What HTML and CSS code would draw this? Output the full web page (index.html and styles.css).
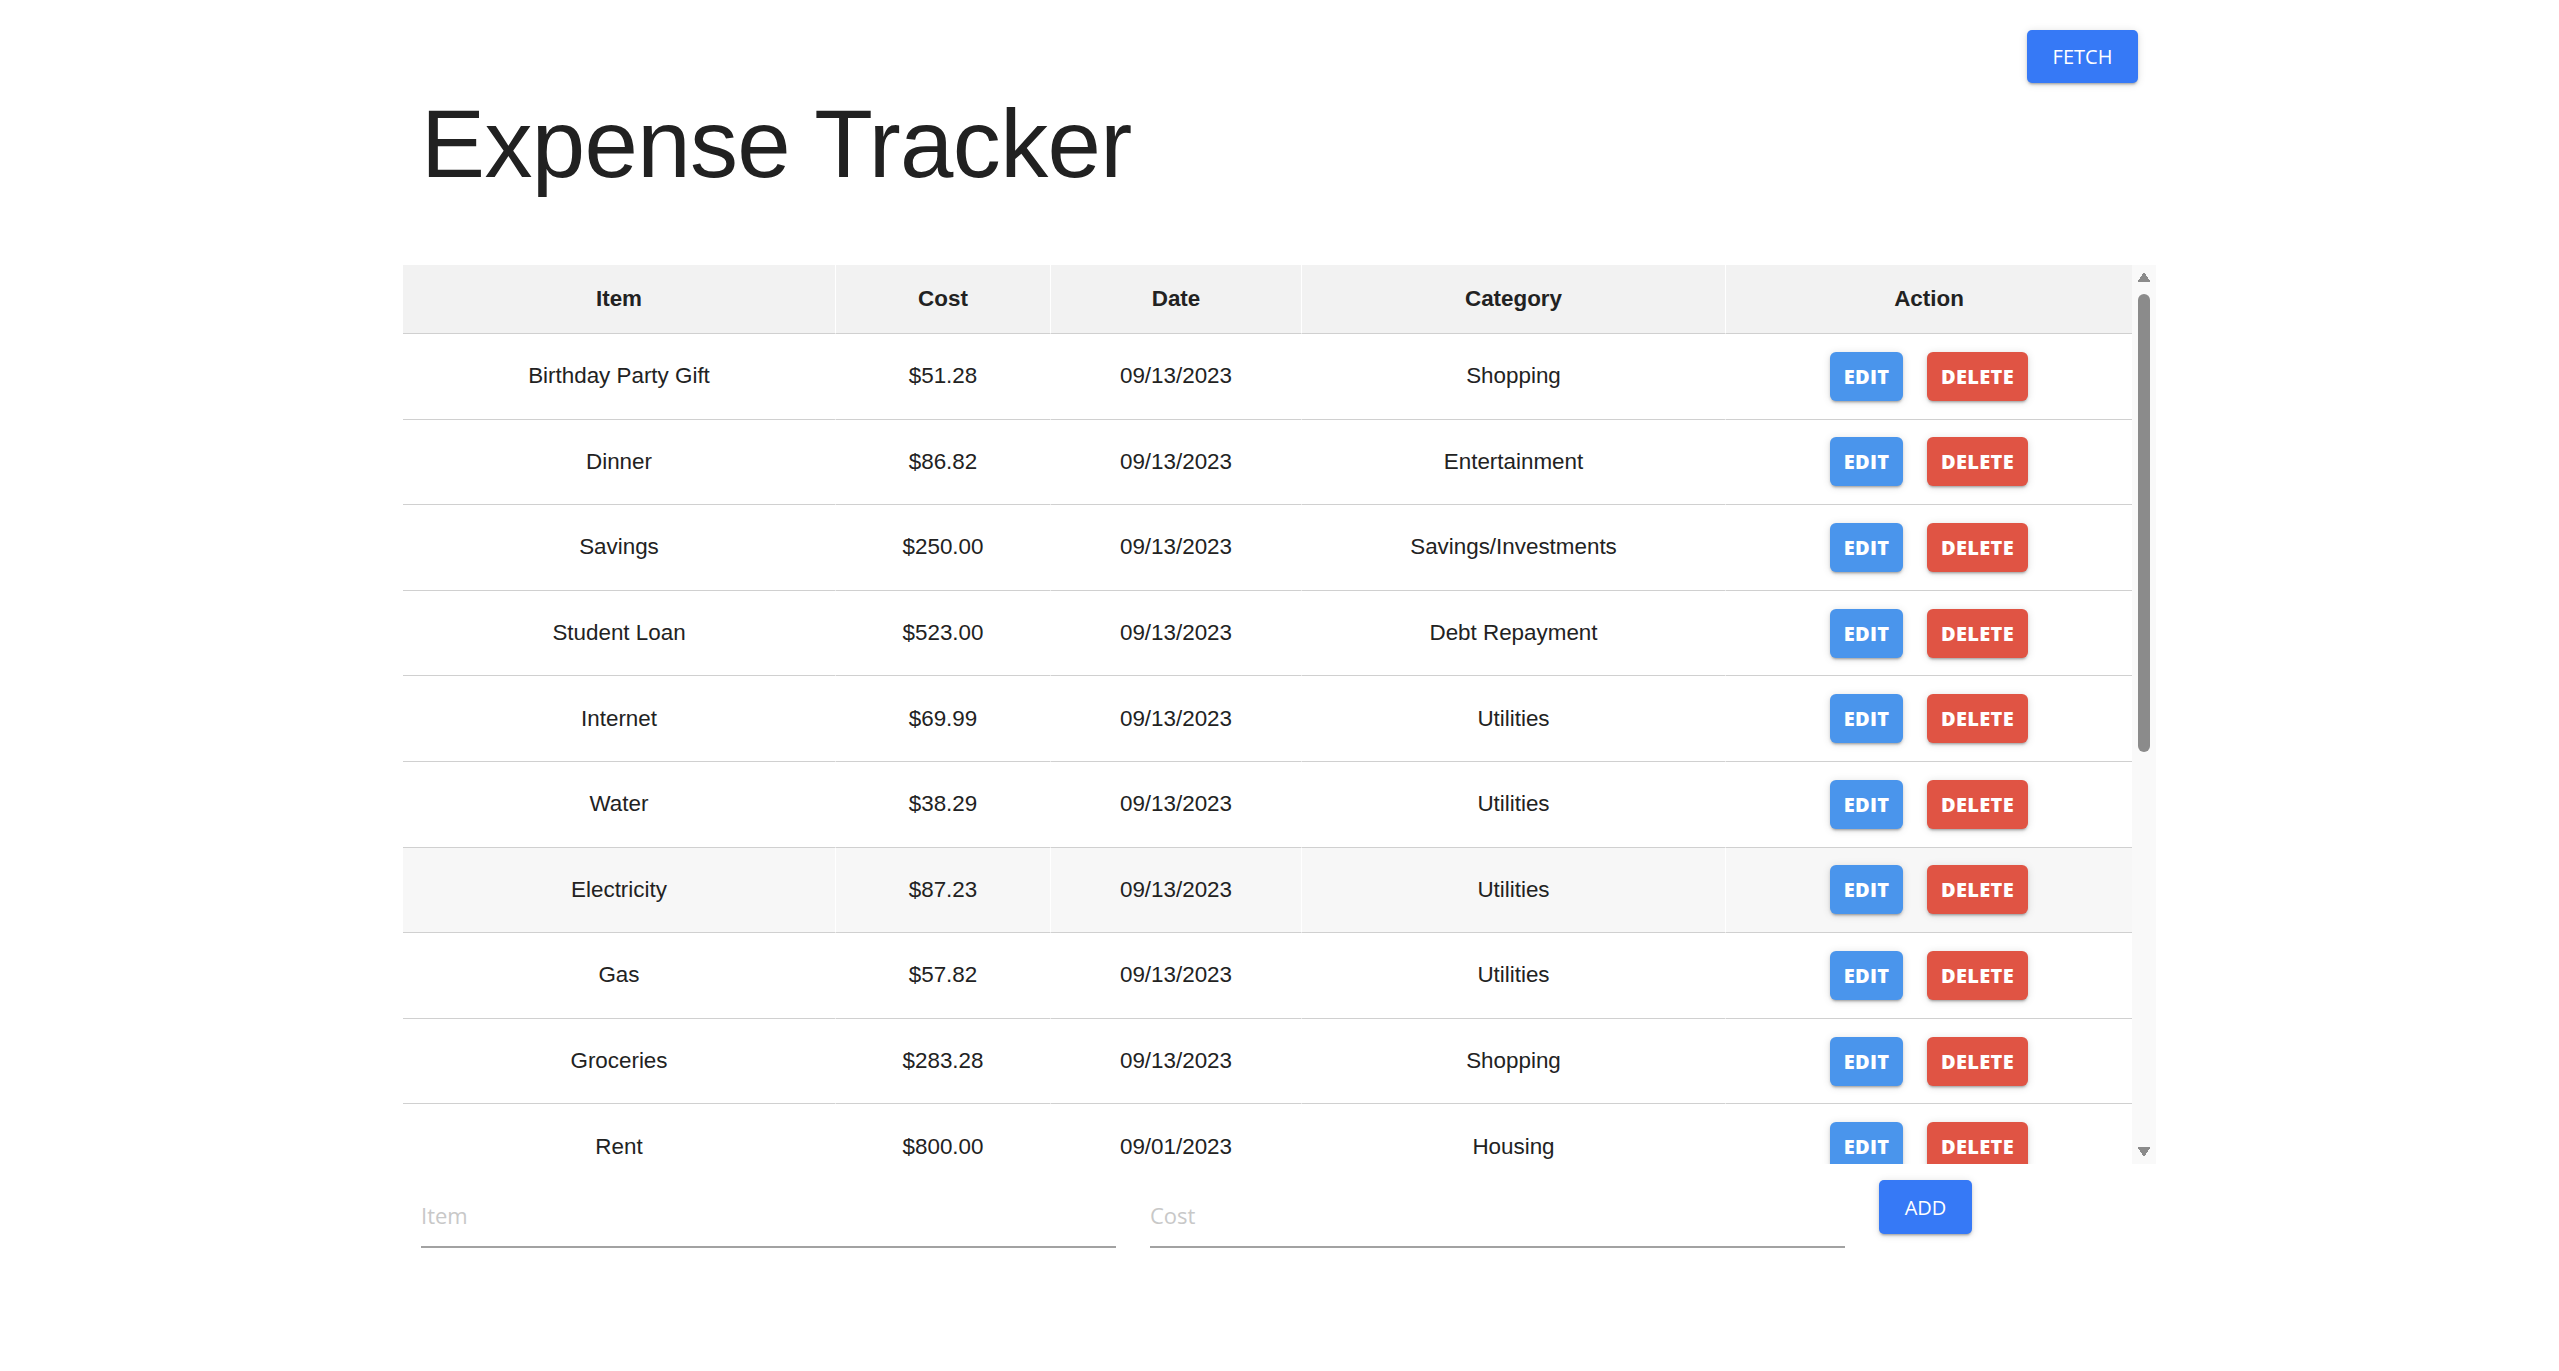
FILE: index.html
```html
<!DOCTYPE html>
<html lang="en">
<head>
<meta charset="utf-8">
<title>Expense Tracker</title>
<link rel="stylesheet" href="styles.css">
</head>
<body>
<div class="page">
  <div class="topbar">
    <button class="btn btn-primary btn-fetch">Fetch</button>
  </div>
  <h1 class="title">Expense Tracker</h1>

  <div class="table-area">
    <div class="table-scroll">
      <table class="expenses">
        <colgroup>
          <col class="c-item"><col class="c-cost"><col class="c-date"><col class="c-cat"><col class="c-action">
        </colgroup>
        <thead>
          <tr><th>Item</th><th>Cost</th><th>Date</th><th>Category</th><th>Action</th></tr>
        </thead>
        <tbody>
          <tr><td>Birthday Party Gift</td><td>$51.28</td><td>09/13/2023</td><td>Shopping</td><td><div class="actions"><button class="btn-sm btn-edit">Edit</button><button class="btn-sm btn-delete">Delete</button></div></td></tr>
          <tr><td>Dinner</td><td>$86.82</td><td>09/13/2023</td><td>Entertainment</td><td><div class="actions"><button class="btn-sm btn-edit">Edit</button><button class="btn-sm btn-delete">Delete</button></div></td></tr>
          <tr><td>Savings</td><td>$250.00</td><td>09/13/2023</td><td>Savings/Investments</td><td><div class="actions"><button class="btn-sm btn-edit">Edit</button><button class="btn-sm btn-delete">Delete</button></div></td></tr>
          <tr><td>Student Loan</td><td>$523.00</td><td>09/13/2023</td><td>Debt Repayment</td><td><div class="actions"><button class="btn-sm btn-edit">Edit</button><button class="btn-sm btn-delete">Delete</button></div></td></tr>
          <tr><td>Internet</td><td>$69.99</td><td>09/13/2023</td><td>Utilities</td><td><div class="actions"><button class="btn-sm btn-edit">Edit</button><button class="btn-sm btn-delete">Delete</button></div></td></tr>
          <tr><td>Water</td><td>$38.29</td><td>09/13/2023</td><td>Utilities</td><td><div class="actions"><button class="btn-sm btn-edit">Edit</button><button class="btn-sm btn-delete">Delete</button></div></td></tr>
          <tr class="hover"><td>Electricity</td><td>$87.23</td><td>09/13/2023</td><td>Utilities</td><td><div class="actions"><button class="btn-sm btn-edit">Edit</button><button class="btn-sm btn-delete">Delete</button></div></td></tr>
          <tr><td>Gas</td><td>$57.82</td><td>09/13/2023</td><td>Utilities</td><td><div class="actions"><button class="btn-sm btn-edit">Edit</button><button class="btn-sm btn-delete">Delete</button></div></td></tr>
          <tr><td>Groceries</td><td>$283.28</td><td>09/13/2023</td><td>Shopping</td><td><div class="actions"><button class="btn-sm btn-edit">Edit</button><button class="btn-sm btn-delete">Delete</button></div></td></tr>
          <tr><td>Rent</td><td>$800.00</td><td>09/01/2023</td><td>Housing</td><td><div class="actions"><button class="btn-sm btn-edit">Edit</button><button class="btn-sm btn-delete">Delete</button></div></td></tr>
          <tr><td>Phone Bill</td><td>$45.00</td><td>09/01/2023</td><td>Utilities</td><td><div class="actions"><button class="btn-sm btn-edit">Edit</button><button class="btn-sm btn-delete">Delete</button></div></td></tr>
          <tr><td>Car Insurance</td><td>$120.50</td><td>09/01/2023</td><td>Insurance</td><td><div class="actions"><button class="btn-sm btn-edit">Edit</button><button class="btn-sm btn-delete">Delete</button></div></td></tr>
          <tr><td>Gym Membership</td><td>$35.00</td><td>09/01/2023</td><td>Health</td><td><div class="actions"><button class="btn-sm btn-edit">Edit</button><button class="btn-sm btn-delete">Delete</button></div></td></tr>
          <tr><td>Streaming Service</td><td>$15.49</td><td>09/01/2023</td><td>Entertainment</td><td><div class="actions"><button class="btn-sm btn-edit">Edit</button><button class="btn-sm btn-delete">Delete</button></div></td></tr>
          <tr><td>Coffee</td><td>$6.75</td><td>08/30/2023</td><td>Food</td><td><div class="actions"><button class="btn-sm btn-edit">Edit</button><button class="btn-sm btn-delete">Delete</button></div></td></tr>
          <tr><td>Books</td><td>$42.10</td><td>08/28/2023</td><td>Education</td><td><div class="actions"><button class="btn-sm btn-edit">Edit</button><button class="btn-sm btn-delete">Delete</button></div></td></tr>
          <tr><td>Fuel</td><td>$54.60</td><td>08/25/2023</td><td>Transportation</td><td><div class="actions"><button class="btn-sm btn-edit">Edit</button><button class="btn-sm btn-delete">Delete</button></div></td></tr>
          <tr><td>Haircut</td><td>$30.00</td><td>08/22/2023</td><td>Personal Care</td><td><div class="actions"><button class="btn-sm btn-edit">Edit</button><button class="btn-sm btn-delete">Delete</button></div></td></tr>
        </tbody>
      </table>
    </div>
    <div class="scrollbar" aria-hidden="true">
      <span class="sb-arrow sb-up"></span>
      <div class="sb-track"><span class="sb-thumb"></span></div>
      <span class="sb-arrow sb-down"></span>
    </div>
  </div>

  <form class="add-row">
    <input class="field" type="text" placeholder="Item">
    <input class="field" type="text" placeholder="Cost">
    <button type="button" class="btn btn-primary btn-add">Add</button>
  </form>
</div>
</body>
</html>
```

FILE: styles.css
```css
* { box-sizing: border-box; }

html, body {
  margin: 0;
  padding: 0;
  background: #ffffff;
}

body {
  font-family: "Liberation Sans", Arial, sans-serif;
  color: #222222;
}

.page {
  width: 1753px;
  margin: 0 auto;
}

.topbar {
  display: flex;
  justify-content: flex-end;
  padding: 30px 18px 0 0;
}

.btn {
  border: 0;
  cursor: pointer;
  font-family: "Open Sans", "Liberation Sans", sans-serif;
  text-transform: uppercase;
  color: #ffffff;
  border-radius: 5px;
  box-shadow: 0 3px 2px -2px rgba(0,0,0,0.2), 0 2px 3px rgba(0,0,0,0.14), 0 1px 8px rgba(0,0,0,0.12);
  padding: 0;
}

.btn-primary {
  background: #3679f6;
}

.btn-fetch {
  width: 111px;
  height: 53px;
  font-size: 20px;
}

.title {
  margin: 6px 0 0;
  padding-left: 18px;
  font-family: "Liberation Sans", Arial, sans-serif;
  font-weight: 400;
  font-size: 96px;
  line-height: 110px;
  letter-spacing: -0.65px;
  color: #212121;
}

.table-area {
  display: flex;
  margin-top: 66px;
  height: 899px;
}

.table-scroll {
  width: 1729px;
  height: 100%;
  overflow: hidden;
}

.scrollbar {
  width: 24px;
  height: 100%;
  display: flex;
  flex-direction: column;
  background: #f9f9f9;
}

.sb-arrow {
  display: block;
  height: 24px;
  flex: none;
  background-position: center;
  background-size: 14px 10px;
  background-repeat: no-repeat;
}

.sb-up {
  background-image: conic-gradient(from 146deg at 50% 0, #8b8b8b 68deg, transparent 0);
}

.sb-down {
  background-image: conic-gradient(from -34deg at 50% 100%, #8b8b8b 68deg, transparent 0);
}

.sb-track {
  flex: 1;
  padding: 5px 6px 0;
}

.sb-thumb {
  display: block;
  height: 458px;
  border-radius: 6px;
  background: #8b8b8b;
}

.expenses {
  width: 100%;
  table-layout: fixed;
  border-collapse: separate;
  border-spacing: 0;
  background: #ffffff;
  font-size: 22.4px;
}

.c-item { width: 433px; }
.c-cost { width: 215px; }
.c-date { width: 251px; }
.c-cat { width: 424px; }
.c-action { width: 406px; }

.expenses th,
.expenses td {
  padding: 0;
  text-align: center;
  vertical-align: middle;
  border-right: 1px solid #ffffff;
  border-bottom: 1px solid #d0d0d0;
  color: #222222;
}

.expenses th:last-child,
.expenses td:last-child {
  border-right: 0;
}

.expenses th {
  height: 69px;
  background: #f2f2f2;
  font-weight: 700;
}

.expenses td {
  height: 85.6px;
  font-weight: 400;
}

.expenses tr.hover td {
  background: #f7f7f7;
}

.actions {
  display: flex;
  justify-content: center;
  gap: 24px;
}

.btn-sm {
  height: 49px;
  border: 0;
  border-radius: 6px;
  padding: 0;
  color: #ffffff;
  font-family: "Open Sans", "Liberation Sans", sans-serif;
  font-weight: 800;
  font-size: 20px;
  letter-spacing: 0.3px;
  text-transform: uppercase;
  cursor: pointer;
  box-shadow: 0 3px 2px -2px rgba(0,0,0,0.2), 0 2px 3px rgba(0,0,0,0.14), 0 1px 8px rgba(0,0,0,0.12);
}

.btn-edit {
  width: 73px;
  background: #4a95ec;
}

.btn-delete {
  width: 101px;
  background: #e05444;
}

.add-row {
  display: flex;
  align-items: flex-start;
  gap: 34px;
  padding-left: 18px;
  margin: 0;
}

.field {
  box-sizing: content-box;
  width: 695px;
  height: 30px;
  margin-top: 36px;
  padding: 0 0 16px;
  border: 0;
  border-bottom: 2px solid #a2a2a2;
  outline: none;
  background: transparent;
  font-family: "Open Sans", "Liberation Sans", sans-serif;
  font-size: 22px;
  line-height: 30px;
  color: #222222;
}

.field::placeholder {
  color: #c8c8c8;
  opacity: 1;
}

.btn-add {
  margin-top: 16px;
  width: 93px;
  height: 54px;
  font-size: 20px;
}
```
